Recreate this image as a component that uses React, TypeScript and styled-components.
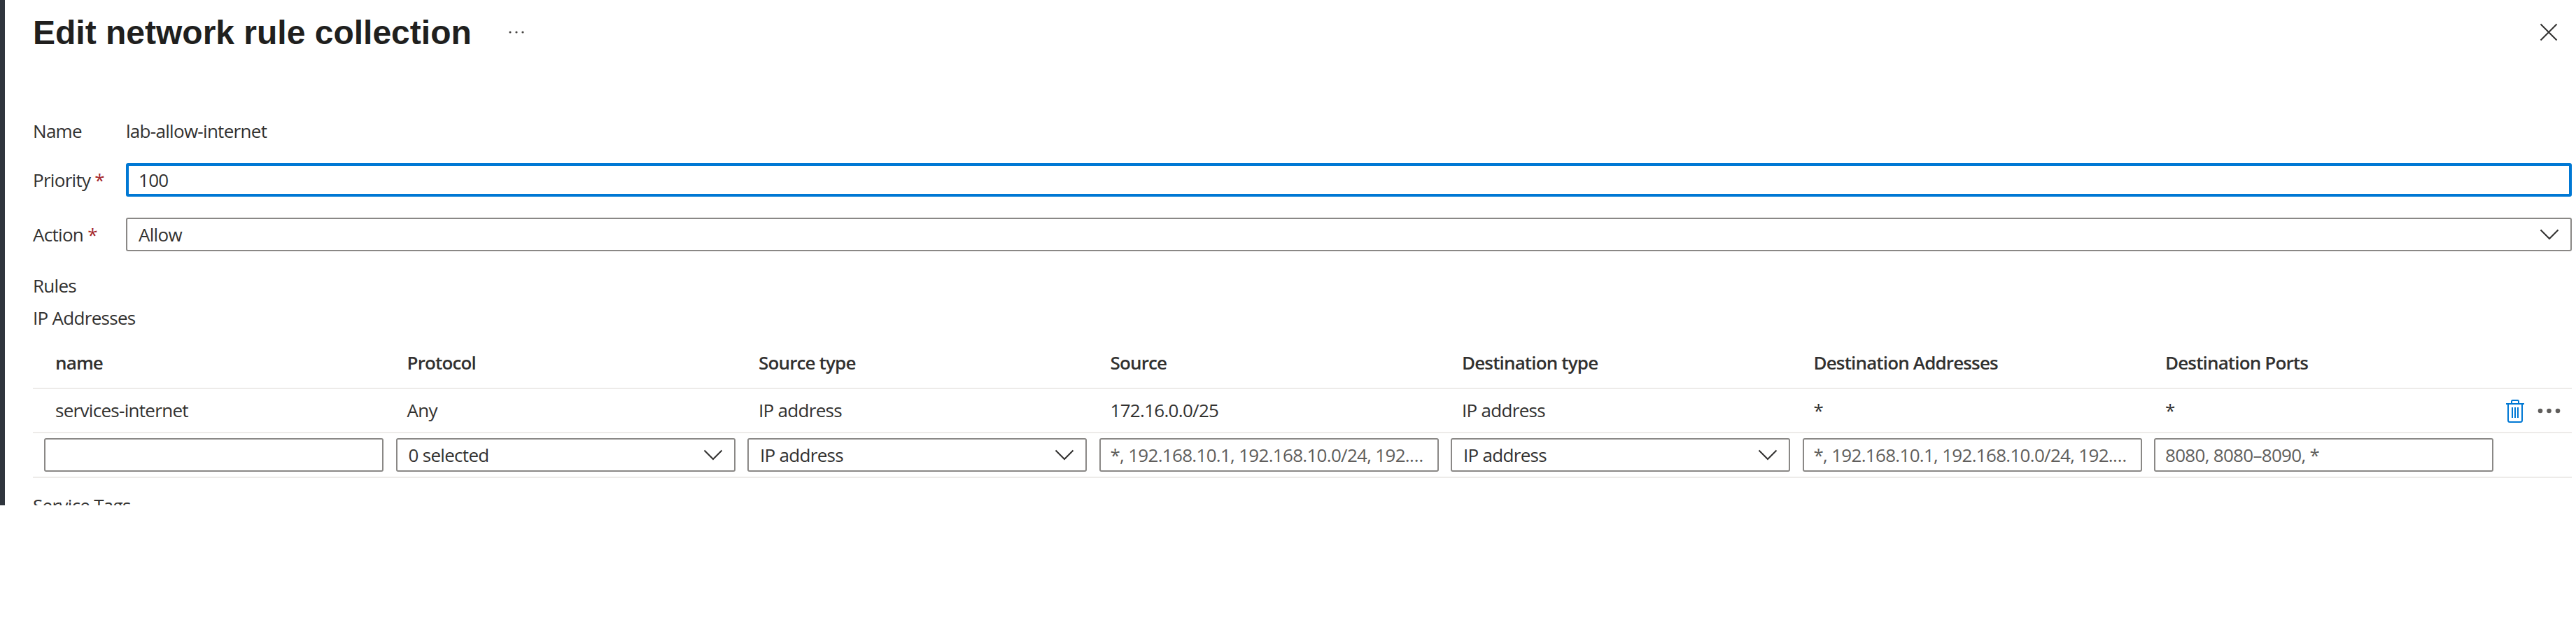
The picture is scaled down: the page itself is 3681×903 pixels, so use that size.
import React from "react";
import styled, { createGlobalStyle } from "styled-components";

const Global = createGlobalStyle`
  html, body { margin: 0; padding: 0; background: #fff; }
  body { font-family: "Open Sans", "Liberation Sans", sans-serif; font-size: 26px; color: #323130; }
  * { box-sizing: border-box; }
`;

const Page = styled.div`
  width: 3681px;
  height: 722px;
  overflow: hidden;
  border-left: 7px solid #2f353d;
  padding: 0 6px 0 40px;
  background: #fff;
  letter-spacing: -0.7px;
`;
const TitleBar = styled.header`
  height: 92px;
  display: flex;
  align-items: center;
`;
const Title = styled.h1`
  margin: 0;
  font-family: "Liberation Sans", Arial, sans-serif;
  font-size: 48px;
  font-weight: 700;
  letter-spacing: 0;
  color: #201f1e;
`;
const TitleMore = styled.span`
  display: flex;
  margin-left: 52px;
`;
const Close = styled.span`
  display: flex;
  margin-left: auto;
  margin-right: 20px;
`;
const FormRow = styled.div<{ $mt: number }>`
  display: flex;
  align-items: center;
  margin-top: ${(p) => p.$mt}px;
  min-height: 36px;
`;
const Label = styled.label`
  width: 133px;
  flex: none;
  line-height: 36px;
`;
const Required = styled.span`
  color: #a4262c;
  margin-left: 6px;
`;
const Value = styled.span`
  line-height: 36px;
`;
const TextInput = styled.input<{ $focus?: boolean }>`
  display: block;
  width: 100%;
  height: 48px;
  min-width: 0;
  padding: 0 14px;
  font: inherit;
  letter-spacing: inherit;
  color: #323130;
  background: #fff;
  outline: none;
  border-radius: 3px;
  border: ${(p) => (p.$focus ? "4px solid #0078d4" : "2px solid #8a8886")};
  text-overflow: ellipsis;
  &::placeholder { color: #605e5c; opacity: 1; }
  &:placeholder-shown { text-overflow: ellipsis; }
`;
const Select = styled.div`
  display: flex;
  align-items: center;
  justify-content: space-between;
  width: 100%;
  height: 48px;
  padding: 0 16px;
  border: 2px solid #8a8886;
  border-radius: 3px;
  background: #fff;
`;
const Caption = styled.div<{ $mt: number }>`
  margin-top: ${(p) => p.$mt}px;
  line-height: 36px;
`;
const Row = styled.div<{ $height: number; $top?: number; $bottom?: number }>`
  position: relative;
  display: grid;
  grid-template-columns: repeat(7, 502.5px);
  align-items: center;
  height: ${(p) => p.$height}px;
  padding-top: ${(p) => p.$top ?? 0}px;
  padding-bottom: ${(p) => p.$bottom ?? 0}px;
  padding-left: 16px;
  border-bottom: 2px solid #edebe9;
`;
const HeadCell = styled.div`
  padding-left: 16px;
  font-weight: 600;
  letter-spacing: -0.85px;
  color: #323130;
`;
const Cell = styled.div`
  padding-left: 16px;
`;
const InputCell = styled.div`
  width: 485px;
`;
const Actions = styled.div`
  position: absolute;
  right: 16px;
  top: 14px;
  display: flex;
  align-items: center;
  gap: 18px;
`;

const Chevron = () => (
  <svg width="28" height="16" viewBox="0 0 28 16" fill="none" stroke="#323130" strokeWidth="2">
    <path d="M1.5 1.5 14 14 26.5 1.5" />
  </svg>
);

const Trash = () => (
  <svg width="28" height="34" viewBox="0 0 28 34" fill="none" stroke="#0078d4" strokeWidth="2">
    <path d="M1 7h26M9 7V3.5C9 2.5 9.5 2 10.5 2h7c1 0 1.500.5 1.500 1.500V7" />
    <path d="M4 7v23.500C4 32 5 33 6.500 33h15c1.500 0 2.500-1 2.500-2.500V7" />
    <path d="M10 12v15M14 12v15M18 12v15" />
  </svg>
);

const Dots = () => (
  <svg width="33" height="8" viewBox="0 0 33 8" fill="#605e5c">
    <circle cx="4" cy="4" r="3.300" />
    <circle cx="16.500" cy="4" r="3.300" />
    <circle cx="29" cy="4" r="3.300" />
  </svg>
);

const SmallDots = () => (
  <svg width="24" height="6" viewBox="0 0 24 6" fill="#484644">
    <circle cx="3" cy="3" r="1.600" />
    <circle cx="12" cy="3" r="1.600" />
    <circle cx="21" cy="3" r="1.600" />
  </svg>
);

const CloseIcon = () => (
  <svg width="26" height="26" viewBox="0 0 26 26" fill="none" stroke="#323130" strokeWidth="2">
    <path d="M1.500 1.500 24.500 24.500M24.500 1.500 1.500 24.500" />
  </svg>
);

const headers = ["name", "Protocol", "Source type", "Source", "Destination type", "Destination Addresses", "Destination Ports"];
const values = ["services-internet", "Any", "IP address", "172.16.0.0/25", "IP address", "*", "*"];
const addressHint = "*, 192.168.10.1, 192.168.10.0/24, 192.168.10.2 - 192.168.10.10";

export default function App() {
  return (
    <>
      <Global />
      <Page>
        <TitleBar>
          <Title>Edit network rule collection</Title>
          <TitleMore><SmallDots /></TitleMore>
          <Close><CloseIcon /></Close>
        </TitleBar>
        <FormRow $mt={77}>
          <Label>Name</Label>
          <Value>lab-allow-internet</Value>
        </FormRow>
        <FormRow $mt={28}>
          <Label>Priority<Required>*</Required></Label>
          <TextInput $focus defaultValue="100" />
        </FormRow>
        <FormRow $mt={30}>
          <Label>Action<Required>*</Required></Label>
          <Select>Allow<Chevron /></Select>
        </FormRow>
        <Caption $mt={31}>Rules</Caption>
        <Caption $mt={10}>IP Addresses</Caption>
        <Row $height={84} $top={10}>
          {headers.map((h) => <HeadCell key={h}>{h}</HeadCell>)}
        </Row>
        <Row $height={63} $bottom={2}>
          {values.map((v, i) => <Cell key={i}>{v}</Cell>)}
          <Actions><Trash /><Dots /></Actions>
        </Row>
        <Row $height={64}>
          <InputCell><TextInput /></InputCell>
          <InputCell><Select>0 selected<Chevron /></Select></InputCell>
          <InputCell><Select>IP address<Chevron /></Select></InputCell>
          <InputCell><TextInput placeholder={addressHint} /></InputCell>
          <InputCell><Select>IP address<Chevron /></Select></InputCell>
          <InputCell><TextInput placeholder={addressHint} /></InputCell>
          <InputCell><TextInput placeholder="8080, 8080–8090, *" /></InputCell>
        </Row>
        <Caption $mt={21}>Service Tags</Caption>
      </Page>
    </>
  );
}
